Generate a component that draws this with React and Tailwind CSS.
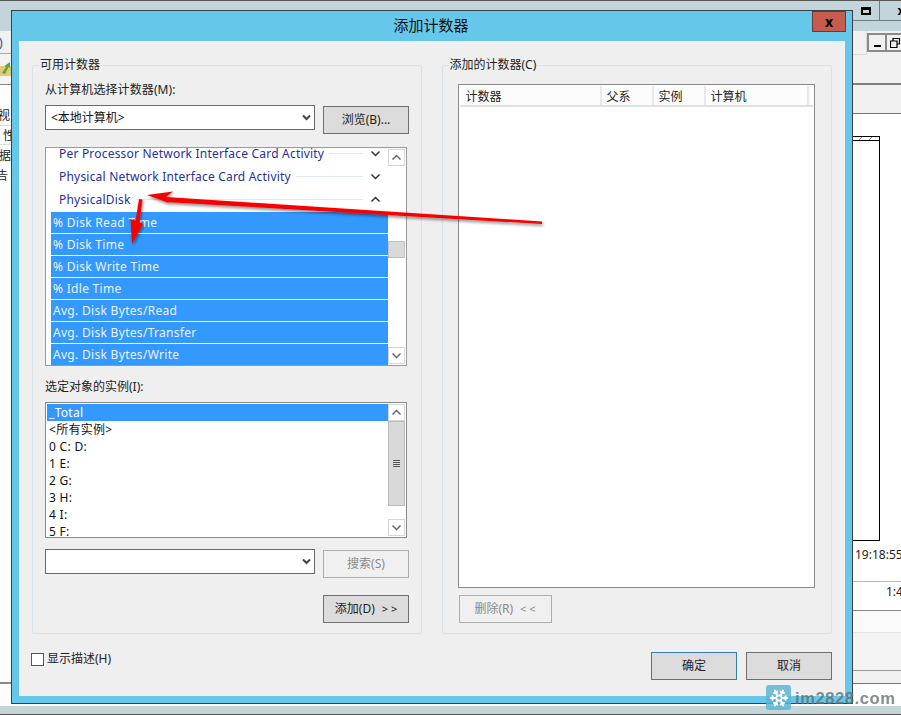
import React from "react";
import { Snowflake } from "lucide-react";

const ui = "font-['Noto_Sans','Noto_Sans_CJK_SC',sans-serif]";

const Chev = ({ up, className = "text-[#333]" }) => (
  <svg width="11" height="7" viewBox="0 0 11 7" className={className}>
    <path d={up ? "M1.5 5.5 L5.5 1.5 L9.5 5.5" : "M1.5 1.5 L5.5 5.5 L9.5 1.5"} fill="none" stroke="currentColor" strokeWidth="1.5" />
  </svg>
);

const ScrollBtn = ({ up }) => (
  <div className="h-[17px] w-[17px] shrink-0 border border-[#d6d6d6] bg-white flex items-center justify-center">
    <Chev up={up} className="text-[#666]" />
  </div>
);

const Btn = ({ children, className = "" }) => (
  <div className={`h-[28px] flex items-center justify-center text-[12px] border ${className}`}>{children}</div>
);

const Combo = ({ children }) => (
  <div className="w-[270px] h-[25px] bg-white border border-[#6a6a6a] flex items-center justify-between pl-[5px] pr-[3px] text-[12px] text-[#111]">
    <span>{children}</span>
    <svg width="9" height="7" viewBox="0 0 9 7" className="text-[#444]">
      <path d="M1 1.5 L4.5 5 L8 1.5" fill="none" stroke="currentColor" strokeWidth="2" />
    </svg>
  </div>
);

const Category = ({ label, up, first }) => (
  <div className={`h-[23px] shrink-0 flex items-center pl-[13px] ${first ? "-mt-[6px]" : ""}`}>
    <span className="text-[12px] tracking-[0.2px] text-[#26309c] whitespace-nowrap">{label}</span>
    <div className="flex-1 h-px bg-[#dfe9f2] ml-[5px]" />
    <div className="w-[25px] flex justify-center"><Chev up={up} /></div>
  </div>
);

const counters = ["% Disk Read Time", "% Disk Time", "% Disk Write Time", "% Idle Time", "Avg. Disk Bytes/Read", "Avg. Disk Bytes/Transfer", "Avg. Disk Bytes/Write"];
const instances = ["<所有实例>", "0 C: D:", "1 E:", "2 G:", "3 H:", "4 I:", "5 F:"];
const columns = [["计数器", "w-[142px] pl-[6px]"], ["父系", "w-[52px] pl-[5px]"], ["实例", "w-[52px] pl-[5px]"], ["计算机", "w-[103px] pl-[5px]"]];

const GroupBox = ({ title, className = "", children }) => (
  <div className={`h-[569px] border border-[#dbe3ea] rounded-[2px] ${className}`}>
    <div className="-mt-[9px] ml-[6px] w-fit h-[16px] px-px leading-[16px] bg-[#efefef] text-[12px] text-[#222]">{title}</div>
    {children}
  </div>
);

function LeftColumn() {
  return (
    <div className={`w-[11px] shrink-0 h-[715px] flex flex-col overflow-hidden text-[12px] text-[#222] ${ui}`}>
      <div className="h-px bg-[#555]" />
      <div className="h-[30px] bg-[#c3d5da]" />
      <div className="h-[23px] bg-[#f0f0f0] border-b border-[#aaa] text-[#2a3fa0] leading-[24px] -indent-[1px]">)</div>
      <div className="h-[31px] bg-[#f3f3f3] border-b border-[#888] flex items-center">
        <svg width="11" height="16" viewBox="0 0 11 16">
          <path d="M0 5H11V15H0Z" fill="#e8c877" />
          <path d="M2 12 L6 6 L4.5 5 L10 1 L10 7 L8.5 6 L5 13Z" fill="#4fae3c" />
        </svg>
      </div>
      <div className="h-[41px] bg-white border-b border-[#ddd] pt-[20px] leading-[22px] -indent-[2px] whitespace-nowrap">视</div>
      <div className="h-[19px] bg-white border-b border-[#ddd] leading-[20px] pl-[3px]">性</div>
      <div className="h-[20px] bg-white leading-[22px] whitespace-nowrap -indent-[1px]">据</div>
      <div className="h-[20px] bg-white leading-[22px] -indent-[4px]">告</div>
      <div className="h-[499px] bg-white border-b-2 border-[#888]" />
      <div className="flex-1 bg-white" />
      <div className="h-[8px] bg-[#c3d5da]" />
      <div className="h-px bg-[#555]" />
    </div>
  );
}

function MiddleColumn() {
  return (
    <div className="flex-1 h-[715px] flex flex-col">
      <div className="h-px bg-[#555]" />
      <div className="h-[30px] bg-[#c3d5da]" />
      <div className="flex-1 bg-white" />
      <div className="h-[8px] bg-[#c3d5da]" />
      <div className="h-px bg-[#555]" />
    </div>
  );
}

function RightColumn() {
  return (
    <div className={`w-[48px] shrink-0 h-[715px] flex flex-col overflow-hidden text-[12px] text-[#222] bg-[#f0f0f0] ${ui}`}>
      <div className="h-px shrink-0 bg-[#555]" />
      <div className="h-[20px] shrink-0 bg-[#c3d5da] border-b border-[#6e7f85] flex">
        <div className="w-[27px] border-r border-[#6e7f85] flex items-center justify-center">
          <div className="w-[10px] h-[8px] border-2 border-t-[3px] border-black" />
        </div>
        <div className="flex-1 flex items-center justify-end text-[13px] font-bold text-black leading-none -mr-[4px]">x</div>
      </div>
      <div className="h-[10px] shrink-0 bg-[#c3d5da]" />
      <div className="h-[24px] shrink-0 flex">
        <div className="w-[14px] border-r border-b border-[#d8d8d8]" />
        <div className="flex-1 pt-[2px] flex">
          <div className="w-[20px] h-[19px] border-2 border-[#8a8a8a] flex items-end justify-center pb-[3px]">
            <div className="w-[7px] h-[2px] bg-black" />
          </div>
          <div className="flex-1 h-[19px] border-y-2 border-[#8a8a8a] flex items-center pl-[3px]">
            <svg width="10" height="10" viewBox="0 0 10 10">
              <path d="M3 2.5V0.5H9.5V6H7.5M0.5 3H7V9.5H0.5Z" fill="none" stroke="#000" strokeWidth="1.2" />
            </svg>
          </div>
        </div>
      </div>
      <div className="h-[30px] shrink-0 border-b-2 border-[#808080]" />
      <div className="h-[29px] shrink-0 border-b border-[#777]" />
      <div className="h-[22px] shrink-0 bg-white" />
      <div className="h-[405px] shrink-0 bg-white">
        <div className="w-[27px] h-[405px] border-r border-b border-black">
          <div className="h-[5px] border-t border-b border-black bg-[repeating-linear-gradient(135deg,#fff_0,#fff_6px,#888_6px,#888_7px)]" />
        </div>
      </div>
      <div className="h-[41px] shrink-0 bg-white border-b border-[#bbb] pt-[5px] pl-[2px] leading-[18px] whitespace-nowrap">19:18:55</div>
      <div className="h-[29px] shrink-0 bg-white border-b border-[#888] pt-[1px] pl-[33px] leading-[18px] whitespace-nowrap">1:4</div>
      <div className="h-[22px] shrink-0 bg-[#fafafa] border-b border-[#e4e4e4]" />
      <div className="h-[38px] shrink-0 bg-[#f4f4f4] border-b border-[#999]" />
      <div className="h-[13px] shrink-0 bg-[#f0f0f0] border-b border-[#777]" />
      <div className="flex-1 bg-white" />
      <div className="h-[8px] shrink-0 bg-[#c3d5da]" />
      <div className="h-px shrink-0 bg-[#555]" />
    </div>
  );
}

function CounterList() {
  return (
    <div className="mt-[12px] w-[362px] h-[219px] border border-[#9a9a9a] bg-white flex overflow-hidden">
      <div className="w-[342px] h-[217px] overflow-hidden flex flex-col">
        <Category first label="Per Processor Network Interface Card Activity" />
        <Category label="Physical Network Interface Card Activity" />
        <Category up label="PhysicalDisk" />
        <div className="pl-[5px] pt-px flex flex-col gap-px">
          {counters.map((c) => (
            <div key={c} className="h-[21px] shrink-0 bg-[#3399ff] text-[#eaf4ff] text-[12px] tracking-[0.3px] leading-[21px] pl-[2px] whitespace-nowrap">{c}</div>
          ))}
        </div>
      </div>
      <div className="w-[17px] h-[217px] flex flex-col pt-px pb-px">
        <ScrollBtn up />
        <div className="h-[75px] shrink-0" />
        <div className="h-[17px] shrink-0 bg-[#d9d9d9] border border-[#c0c0c0]" />
        <div className="flex-1" />
        <ScrollBtn />
      </div>
    </div>
  );
}

function InstanceList() {
  return (
    <div className="mt-[8px] w-[362px] h-[136px] border border-[#8a8a8a] bg-white flex overflow-hidden">
      <div className="w-[342px] h-[133px] overflow-hidden pt-px pl-px">
        <div className="h-[17px] bg-[#3399ff] text-white text-[12px] tracking-[0.3px] leading-[17px] pl-[2px]">_Total</div>
        {instances.map((t) => (
          <div key={t} className="h-[17px] text-[12px] tracking-[0.3px] text-[#111] leading-[18px] pl-[2px] whitespace-nowrap">{t}</div>
        ))}
      </div>
      <div className="w-[17px] h-[133px] flex flex-col pt-px">
        <ScrollBtn up />
        <div className="h-[85px] shrink-0 bg-[#d9d9d9] border border-[#bdbdbd] flex flex-col items-center justify-center gap-px">
          <div className="w-[7px] h-px bg-[#555]" />
          <div className="w-[7px] h-px bg-[#555]" />
          <div className="w-[7px] h-px bg-[#555]" />
          <div className="w-[7px] h-px bg-[#555]" />
        </div>
        <div className="flex-1" />
        <ScrollBtn />
      </div>
    </div>
  );
}

function Dialog() {
  return (
    <div className={`absolute left-[11px] top-[10px] w-[842px] h-[694px] border border-[#3b4044] bg-[#65c8ea] flex flex-col px-[7px] pb-[7px] ${ui}`}>
      <div className="h-[30px] shrink-0 flex items-center justify-center text-[15px] text-[#111] relative pb-[2px] pr-[2px]">
        添加计数器
        <div className="absolute -right-[1px] top-0 w-[34px] h-[21px] bg-[#c75b4f] border border-[#6b3a36] flex items-center justify-center text-[14px] font-bold text-black leading-none">x</div>
      </div>
      <div className="flex-1 bg-[#efefef] flex flex-col pt-[24px] pl-[13px] pr-[13px]">
        <div className="flex gap-[20px]">
          <GroupBox title="可用计数器" className="w-[390px]">
            <div className="pl-[12px] flex flex-col">
              <div className="mt-[9px] h-[16px] leading-[16px] text-[12px] tracking-[0.1px] text-[#222]">从计算机选择计数器(M):</div>
              <div className="mt-[7px] h-[30px] flex gap-[8px] items-start">
                <Combo>&lt;本地计算机&gt;</Combo>
                <Btn className="mt-px w-[86px] bg-[#dcdcdc] border-[#707070] text-[#222]">浏览(B)...</Btn>
              </div>
              <CounterList />
              <div className="mt-[12px] h-[16px] leading-[18px] text-[12px] text-[#222]">选定对象的实例(I):</div>
              <InstanceList />
              <div className="mt-[11px] h-[30px] flex gap-[8px] items-start">
                <Combo />
                <Btn className="mt-px w-[86px] bg-[#f0f0f0] border-[#adadad] text-[#8a8a8a]">搜索(S)</Btn>
              </div>
              <div className="mt-[16px] w-[364px] flex justify-end">
                <Btn className="w-[86px] gap-[7px] bg-[#dcdcdc] border-[#707070] text-[#222]">添加(D) <span className="text-[11px]">&gt; &gt;</span></Btn>
              </div>
            </div>
          </GroupBox>
          <GroupBox title="添加的计数器(C)" className="w-[391px]">
            <div className="pl-[15px] flex flex-col">
              <div className="mt-[11px] w-[357px] h-[504px] border border-[#8a8a8a] bg-white p-px">
                <div className="h-[21px] flex bg-[#fcfcfc] border-b-2 border-[#e0e0e0] text-[12px] text-[#222]">
                  {columns.map(([c, w]) => (
                    <div key={c} className={`${w} border-r-2 border-[#e8e8e8] leading-[22px]`}>{c}</div>
                  ))}
                </div>
              </div>
              <Btn className="mt-[7px] ml-px w-[93px] gap-[7px] bg-[#f0f0f0] border-[#adadad] text-[#8a8a8a]">删除(R) <span className="text-[11px]">&lt; &lt;</span></Btn>
            </div>
          </GroupBox>
        </div>
        <div className="mt-[18px] flex items-start justify-between -ml-px">
          <div className="flex items-center gap-[3px] h-[14px] text-[12px] text-[#222]">
            <div className="w-[13px] h-[13px] bg-white border border-[#555]" />
            显示描述(H)
          </div>
          <div className="flex gap-[9px]">
            <Btn className="w-[86px] bg-[#dcdcdc] border-[#2f7fb5] text-[#222]">确定</Btn>
            <Btn className="w-[86px] bg-[#dcdcdc] border-[#707070] text-[#222]">取消</Btn>
          </div>
        </div>
      </div>
    </div>
  );
}

export default function App() {
  return (
    <div className="relative w-[901px] h-[715px] overflow-hidden flex bg-white">
      <LeftColumn />
      <MiddleColumn />
      <RightColumn />
      <Dialog />
      <svg className="absolute left-0 top-0 pointer-events-none" width="901" height="715" viewBox="0 0 901 715">
        <defs>
          <filter id="shadow" x="-10%" y="-30%" width="120%" height="160%">
            <feDropShadow dx="1" dy="2" stdDeviation="1.5" floodColor="#000" floodOpacity="0.45" />
          </filter>
        </defs>
        <g fill="#f80000" filter="url(#shadow)">
          <path d="M147 195 L173 191.5 L166 197 L542 221.5 L542 224 L166 202 L173 204.5 Z" />
          <path d="M132 244 L130.5 219 L135.5 221 L139 199 L142.5 199.5 L139.5 222 L143 224 Z" />
        </g>
      </svg>
      <div className="absolute left-[766px] top-[685px] w-[25px] h-[25px] rounded-[3px] bg-[#5fb5d5]/85 flex items-center justify-center">
        <Snowflake size={20} strokeWidth={2.2} color="#ffffff" />
      </div>
      <div className="absolute left-[795px] top-[686px] h-[24px] leading-[24px] text-[16.5px] font-bold tracking-[0.6px] text-[#5f6f76]/80 font-['Liberation_Sans',sans-serif]">im2828.com</div>
    </div>
  );
}
